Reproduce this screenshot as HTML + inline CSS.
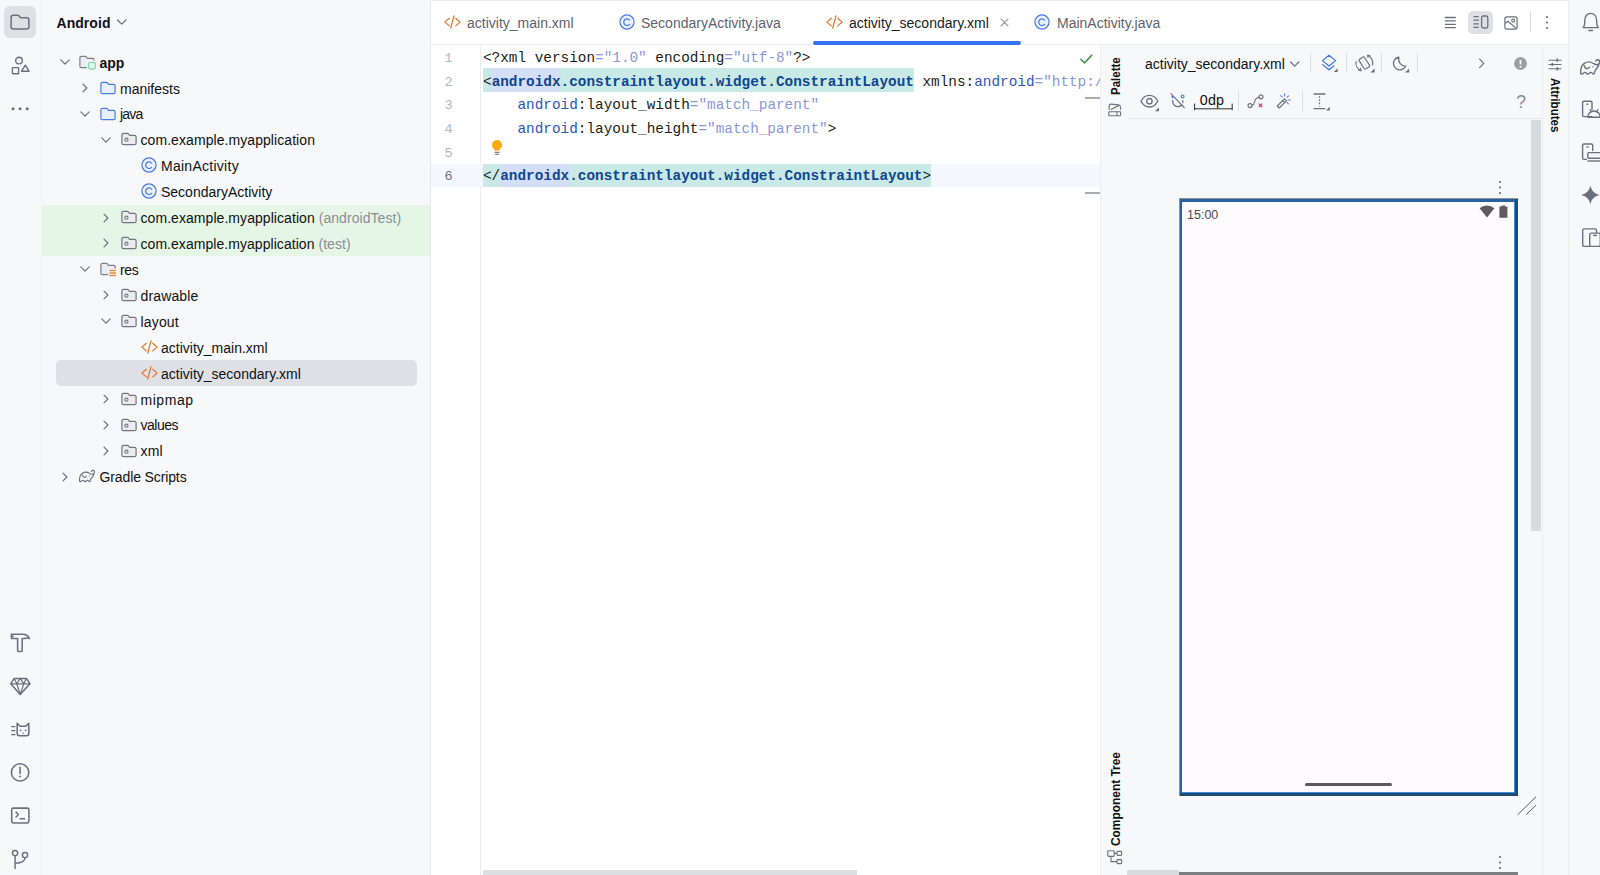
<!DOCTYPE html>
<html><head><meta charset="utf-8"><title>Android Studio</title>
<style>
html,body{margin:0;padding:0}
body{width:1600px;height:875px;position:relative;overflow:hidden;background:#f7f8fa;font-family:"Liberation Sans",sans-serif;font-size:14px;color:#1e1f22}
.abs{position:absolute}
svg{position:absolute;overflow:visible;fill:none}
.t{position:absolute;white-space:pre;line-height:26px;height:26px;font-size:14px;color:#101114}
.g{color:#8a8d97}
.tab{position:absolute;white-space:pre;top:9.7px;line-height:26px;font-size:14px;color:#5f626b}
.code{position:absolute;left:483px;white-space:pre;font-family:"Liberation Mono",monospace;font-size:14.37px;line-height:23.7px;height:23.7px;color:#1c1d21}
.ln{position:absolute;left:438.7px;width:14px;text-align:right;font-family:"Liberation Mono",monospace;font-size:13.5px;line-height:23.7px;color:#b2b6c3}
.tg{color:#0f4591;font-weight:bold}
.at{color:#2a57b8}
.st{color:#8a96dc}
.vt{position:absolute;white-space:pre;font-size:13.5px;line-height:16px;height:16px;color:#111;transform-origin:0 0}
</style></head><body>
<div class="abs" style="left:431px;top:0px;width:1137px;height:45px;background:#fff;"></div>
<div class="abs" style="left:431px;top:45px;width:669px;height:830px;background:#fff;"></div>
<div class="abs" style="left:41px;top:0px;width:1px;height:875px;background:#f0f1f4;"></div>
<div class="abs" style="left:430px;top:0px;width:1px;height:875px;background:#e6e7eb;"></div>
<div class="abs" style="left:431px;top:44px;width:1137px;height:1px;background:#ecedf0;"></div>
<div class="abs" style="left:431px;top:0px;width:1137px;height:1px;background:#ececef;"></div>
<div class="abs" style="left:480px;top:45px;width:1px;height:830px;background:#eaebee;"></div>
<div class="abs" style="left:1100px;top:45px;width:1px;height:830px;background:#ebecf0;"></div>
<div class="abs" style="left:1568px;top:0px;width:1px;height:875px;background:#ebecf0;"></div>
<div class="abs" style="left:1542px;top:45px;width:1px;height:830px;background:#ebecf0;"></div>
<div class="abs" style="left:1128px;top:118px;width:414px;height:1px;background:#e6e7eb;"></div>
<div id="tree">
<div class="abs" style="left:42px;top:204.52px;width:388px;height:51.91999999999999px;background:#e5f6e6;"></div>
<div class="abs" style="left:56px;top:360.24px;width:361px;height:25.6px;background:#dfe0e5;border-radius:5px"></div>
<div class="abs" style="left:4px;top:6px;width:32px;height:32px;background:#dfe0e4;border-radius:6px"></div>
<div class="t" style="left:56.5px;top:9.7px;font-weight:bold;letter-spacing:0.05px">Android</div>
<svg style="left:115.00px;top:16.00px" width="14" height="12" viewBox="0 0 14 12"><path d="M2.5 4L6.7 8.2L10.9 4" stroke="#6c707e" stroke-width="1.2" stroke-linecap="round" stroke-linejoin="round"/></svg>
<svg style="left:58.80px;top:56.00px" width="12" height="12" viewBox="0 0 12 12"><path d="M1.8 3.9L6 8.1L10.2 3.9" stroke="#6c707e" stroke-width="1.2" stroke-linecap="round" stroke-linejoin="round"/></svg>
<svg style="left:79.00px;top:53.80px" width="16" height="16" viewBox="0 0 16 16"><path d="M0.9 3.8Q0.9 2.3 2.4 2.3H6.2Q6.9 2.3 7.4 2.9L8.6 4.3H13.6Q15.1 4.3 15.1 5.8V12.2Q15.1 13.7 13.6 13.7H2.4Q0.9 13.7 0.9 12.2Z" stroke="#7b7e88" fill="#ebecf0" stroke-width="1.2"/><rect x="7.7" y="6.4" width="10" height="10" fill="#f7f8fa"/><rect x="9.5" y="8.3" width="6.8" height="6.8" rx="1.8" stroke="#86d6ae" fill="#e2f7ec" stroke-width="1.3"/></svg>
<div class="t" style="left:99.5px;top:49.60px;font-weight:bold;">app</div>
<svg style="left:79.00px;top:81.92px" width="12" height="12" viewBox="0 0 12 12"><path d="M4 2.1L7.9 6L4 9.9" stroke="#6c707e" stroke-width="1.2" stroke-linecap="round" stroke-linejoin="round"/></svg>
<svg style="left:100.00px;top:79.72px" width="16" height="16" viewBox="0 0 16 16"><path d="M0.9 3.8Q0.9 2.3 2.4 2.3H6.2Q6.9 2.3 7.4 2.9L8.6 4.3H13.6Q15.1 4.3 15.1 5.8V12.2Q15.1 13.7 13.6 13.7H2.4Q0.9 13.7 0.9 12.2Z" stroke="#4a7be0" fill="#e8f0fe" stroke-width="1.2"/></svg>
<div class="t" style="left:120px;top:75.52px;">manifests</div>
<svg style="left:79.00px;top:107.84px" width="12" height="12" viewBox="0 0 12 12"><path d="M1.8 3.9L6 8.1L10.2 3.9" stroke="#6c707e" stroke-width="1.2" stroke-linecap="round" stroke-linejoin="round"/></svg>
<svg style="left:100.00px;top:105.64px" width="16" height="16" viewBox="0 0 16 16"><path d="M0.9 3.8Q0.9 2.3 2.4 2.3H6.2Q6.9 2.3 7.4 2.9L8.6 4.3H13.6Q15.1 4.3 15.1 5.8V12.2Q15.1 13.7 13.6 13.7H2.4Q0.9 13.7 0.9 12.2Z" stroke="#4a7be0" fill="#e8f0fe" stroke-width="1.2"/></svg>
<div class="t" style="left:120px;top:101.44px;letter-spacing:-0.8px;">java</div>
<svg style="left:99.60px;top:133.76px" width="12" height="12" viewBox="0 0 12 12"><path d="M1.8 3.9L6 8.1L10.2 3.9" stroke="#6c707e" stroke-width="1.2" stroke-linecap="round" stroke-linejoin="round"/></svg>
<svg style="left:120.80px;top:131.46px" width="16" height="16" viewBox="0 0 16 16"><path d="M0.9 3.8Q0.9 2.3 2.4 2.3H6.2Q6.9 2.3 7.4 2.9L8.6 4.3H13.6Q15.1 4.3 15.1 5.8V12.2Q15.1 13.7 13.6 13.7H2.4Q0.9 13.7 0.9 12.2Z" stroke="#737680" fill="#ebecf0" stroke-width="1.2"/><circle cx="5.4" cy="8.7" r="1.6" stroke="#737680" stroke-width="1.1"/></svg>
<div class="t" style="left:140.5px;top:127.36px;letter-spacing:0.07px;">com.example.myapplication</div>
<svg style="left:141.30px;top:157.48px" width="16" height="16" viewBox="0 0 16 16"><circle cx="8" cy="8" r="7.1" stroke="#4a7be0" fill="#e8f0fe" stroke-width="1.2"/><path d="M10.6 6.1A3.3 3.3 0 1 0 10.6 10.3" stroke="#4a7be0" stroke-width="1.25" stroke-linecap="round"/></svg>
<div class="t" style="left:161px;top:153.28px;letter-spacing:0.27px;">MainActivity</div>
<svg style="left:141.30px;top:183.40px" width="16" height="16" viewBox="0 0 16 16"><circle cx="8" cy="8" r="7.1" stroke="#4a7be0" fill="#e8f0fe" stroke-width="1.2"/><path d="M10.6 6.1A3.3 3.3 0 1 0 10.6 10.3" stroke="#4a7be0" stroke-width="1.25" stroke-linecap="round"/></svg>
<div class="t" style="left:161px;top:179.20px;">SecondaryActivity</div>
<svg style="left:99.60px;top:211.52px" width="12" height="12" viewBox="0 0 12 12"><path d="M4 2.1L7.9 6L4 9.9" stroke="#6c707e" stroke-width="1.2" stroke-linecap="round" stroke-linejoin="round"/></svg>
<svg style="left:120.80px;top:209.22px" width="16" height="16" viewBox="0 0 16 16"><path d="M0.9 3.8Q0.9 2.3 2.4 2.3H6.2Q6.9 2.3 7.4 2.9L8.6 4.3H13.6Q15.1 4.3 15.1 5.8V12.2Q15.1 13.7 13.6 13.7H2.4Q0.9 13.7 0.9 12.2Z" stroke="#737680" fill="#ebecf0" stroke-width="1.2"/><circle cx="5.4" cy="8.7" r="1.6" stroke="#737680" stroke-width="1.1"/></svg>
<div class="t" style="left:140.5px;top:205.12px;letter-spacing:0.06px;">com.example.myapplication <span class="g">(androidTest)</span></div>
<svg style="left:99.60px;top:237.44px" width="12" height="12" viewBox="0 0 12 12"><path d="M4 2.1L7.9 6L4 9.9" stroke="#6c707e" stroke-width="1.2" stroke-linecap="round" stroke-linejoin="round"/></svg>
<svg style="left:120.80px;top:235.14px" width="16" height="16" viewBox="0 0 16 16"><path d="M0.9 3.8Q0.9 2.3 2.4 2.3H6.2Q6.9 2.3 7.4 2.9L8.6 4.3H13.6Q15.1 4.3 15.1 5.8V12.2Q15.1 13.7 13.6 13.7H2.4Q0.9 13.7 0.9 12.2Z" stroke="#737680" fill="#ebecf0" stroke-width="1.2"/><circle cx="5.4" cy="8.7" r="1.6" stroke="#737680" stroke-width="1.1"/></svg>
<div class="t" style="left:140.5px;top:231.04px;letter-spacing:0.05px;">com.example.myapplication <span class="g">(test)</span></div>
<svg style="left:79.00px;top:263.36px" width="12" height="12" viewBox="0 0 12 12"><path d="M1.8 3.9L6 8.1L10.2 3.9" stroke="#6c707e" stroke-width="1.2" stroke-linecap="round" stroke-linejoin="round"/></svg>
<svg style="left:100.00px;top:260.86px" width="16" height="16" viewBox="0 0 16 16"><path d="M0.9 3.8Q0.9 2.3 2.4 2.3H6.2Q6.9 2.3 7.4 2.9L8.6 4.3H13.6Q15.1 4.3 15.1 5.8V12.2Q15.1 13.7 13.6 13.7H2.4Q0.9 13.7 0.9 12.2Z" stroke="#7d808b" fill="#ebecf0" stroke-width="1.2"/><rect x="8.2" y="7.6" width="9" height="9" fill="#f7f8fa"/><path d="M9.4 9.6H16M9.4 12H16M9.4 14.4H16" stroke="#ea8a3c" stroke-width="1.5"/></svg>
<div class="t" style="left:120px;top:256.96px;letter-spacing:-0.3px;">res</div>
<svg style="left:99.60px;top:289.28px" width="12" height="12" viewBox="0 0 12 12"><path d="M4 2.1L7.9 6L4 9.9" stroke="#6c707e" stroke-width="1.2" stroke-linecap="round" stroke-linejoin="round"/></svg>
<svg style="left:120.80px;top:286.98px" width="16" height="16" viewBox="0 0 16 16"><path d="M0.9 3.8Q0.9 2.3 2.4 2.3H6.2Q6.9 2.3 7.4 2.9L8.6 4.3H13.6Q15.1 4.3 15.1 5.8V12.2Q15.1 13.7 13.6 13.7H2.4Q0.9 13.7 0.9 12.2Z" stroke="#737680" fill="#ebecf0" stroke-width="1.2"/><circle cx="5.4" cy="8.7" r="1.6" stroke="#737680" stroke-width="1.1"/></svg>
<div class="t" style="left:140.5px;top:282.88px;letter-spacing:0.14px;">drawable</div>
<svg style="left:99.60px;top:315.20px" width="12" height="12" viewBox="0 0 12 12"><path d="M1.8 3.9L6 8.1L10.2 3.9" stroke="#6c707e" stroke-width="1.2" stroke-linecap="round" stroke-linejoin="round"/></svg>
<svg style="left:120.80px;top:312.90px" width="16" height="16" viewBox="0 0 16 16"><path d="M0.9 3.8Q0.9 2.3 2.4 2.3H6.2Q6.9 2.3 7.4 2.9L8.6 4.3H13.6Q15.1 4.3 15.1 5.8V12.2Q15.1 13.7 13.6 13.7H2.4Q0.9 13.7 0.9 12.2Z" stroke="#737680" fill="#ebecf0" stroke-width="1.2"/><circle cx="5.4" cy="8.7" r="1.6" stroke="#737680" stroke-width="1.1"/></svg>
<div class="t" style="left:140.5px;top:308.80px;letter-spacing:0.17px;">layout</div>
<svg style="left:140.50px;top:339.12px" width="17" height="16" viewBox="0 0 17 16"><path d="M5.3 4.3L0.9 8.1L5.3 11.9M11.7 4.3L16.1 8.1L11.7 11.9M10 1.8L6.7 14.2" stroke="#e2752b" stroke-width="1.25" stroke-linecap="round" stroke-linejoin="round"/></svg>
<div class="t" style="left:161px;top:334.72px;">activity_main.xml</div>
<svg style="left:140.50px;top:365.04px" width="17" height="16" viewBox="0 0 17 16"><path d="M5.3 4.3L0.9 8.1L5.3 11.9M11.7 4.3L16.1 8.1L11.7 11.9M10 1.8L6.7 14.2" stroke="#e2752b" stroke-width="1.25" stroke-linecap="round" stroke-linejoin="round"/></svg>
<div class="t" style="left:161px;top:360.64px;">activity_secondary.xml</div>
<svg style="left:99.60px;top:392.96px" width="12" height="12" viewBox="0 0 12 12"><path d="M4 2.1L7.9 6L4 9.9" stroke="#6c707e" stroke-width="1.2" stroke-linecap="round" stroke-linejoin="round"/></svg>
<svg style="left:120.80px;top:390.66px" width="16" height="16" viewBox="0 0 16 16"><path d="M0.9 3.8Q0.9 2.3 2.4 2.3H6.2Q6.9 2.3 7.4 2.9L8.6 4.3H13.6Q15.1 4.3 15.1 5.8V12.2Q15.1 13.7 13.6 13.7H2.4Q0.9 13.7 0.9 12.2Z" stroke="#737680" fill="#ebecf0" stroke-width="1.2"/><circle cx="5.4" cy="8.7" r="1.6" stroke="#737680" stroke-width="1.1"/></svg>
<div class="t" style="left:140.5px;top:386.56px;letter-spacing:0.55px;">mipmap</div>
<svg style="left:99.60px;top:418.88px" width="12" height="12" viewBox="0 0 12 12"><path d="M4 2.1L7.9 6L4 9.9" stroke="#6c707e" stroke-width="1.2" stroke-linecap="round" stroke-linejoin="round"/></svg>
<svg style="left:120.80px;top:416.58px" width="16" height="16" viewBox="0 0 16 16"><path d="M0.9 3.8Q0.9 2.3 2.4 2.3H6.2Q6.9 2.3 7.4 2.9L8.6 4.3H13.6Q15.1 4.3 15.1 5.8V12.2Q15.1 13.7 13.6 13.7H2.4Q0.9 13.7 0.9 12.2Z" stroke="#737680" fill="#ebecf0" stroke-width="1.2"/><circle cx="5.4" cy="8.7" r="1.6" stroke="#737680" stroke-width="1.1"/></svg>
<div class="t" style="left:140.5px;top:412.48px;letter-spacing:-0.5px;">values</div>
<svg style="left:99.60px;top:444.80px" width="12" height="12" viewBox="0 0 12 12"><path d="M4 2.1L7.9 6L4 9.9" stroke="#6c707e" stroke-width="1.2" stroke-linecap="round" stroke-linejoin="round"/></svg>
<svg style="left:120.80px;top:442.50px" width="16" height="16" viewBox="0 0 16 16"><path d="M0.9 3.8Q0.9 2.3 2.4 2.3H6.2Q6.9 2.3 7.4 2.9L8.6 4.3H13.6Q15.1 4.3 15.1 5.8V12.2Q15.1 13.7 13.6 13.7H2.4Q0.9 13.7 0.9 12.2Z" stroke="#737680" fill="#ebecf0" stroke-width="1.2"/><circle cx="5.4" cy="8.7" r="1.6" stroke="#737680" stroke-width="1.1"/></svg>
<div class="t" style="left:140.5px;top:438.40px;letter-spacing:0.2px;">xml</div>
<svg style="left:58.80px;top:470.72px" width="12" height="12" viewBox="0 0 12 12"><path d="M4 2.1L7.9 6L4 9.9" stroke="#6c707e" stroke-width="1.2" stroke-linecap="round" stroke-linejoin="round"/></svg>
<svg style="left:79.00px;top:469.12px" width="16.0" height="14.0" viewBox="0 0 16 14"><path d="M0.6 12.3C0.3 9 1.5 5.5 3.4 4.2C5.5 2.8 8.5 3 10.4 4.3C11.8 5.2 13.5 5.6 14.6 4.8C15.9 3.8 15.8 1.7 14.4 1.4C13.5 1.2 12.7 1.7 12.4 2.4M15 4.6C14.8 6.5 13.5 8 12.4 9.2C11.6 10.2 11.4 11.3 11.2 12.3C10.7 12.8 10 12.6 9.6 11.9C9 11.1 8 11.1 7.4 11.9C6.8 12.9 5.6 12.9 5 11.9C4.4 11.1 3.4 11.1 2.8 11.9C2.2 12.7 1.2 12.9 0.6 12.3M3.3 6C3.6 7.8 5 8.6 6.2 8.2C7 8 7.5 7.5 7.6 7.2" stroke="#6c707e" stroke-width="1.10" stroke-linecap="round" stroke-linejoin="round"/><circle cx="10.2" cy="6.8" r="0.55" fill="#6c707e"/></svg>
<div class="t" style="left:99.5px;top:464.32px;letter-spacing:-0.12px;">Gradle Scripts</div>
</div>
<div id="leftstrip">
<svg style="left:10.00px;top:12.00px" width="20" height="20" viewBox="0 0 20 20"><path d="M1.1 5.6Q1.1 3.3 3.4 3.3H7.6Q8.5 3.3 9.1 4L10.6 5.7H16.6Q18.9 5.7 18.9 8V14.8Q18.9 17.1 16.6 17.1H3.4Q1.1 17.1 1.1 14.8Z" stroke="#6c707e" stroke-width="1.5" stroke-linejoin="round"/></svg>
<svg style="left:10.00px;top:56.00px" width="20" height="20" viewBox="0 0 20 20"><circle cx="9" cy="4.6" r="3.3" stroke="#6c707e" stroke-width="1.4"/><rect x="2.4" y="11.6" width="6.2" height="6.2" rx="0.6" stroke="#6c707e" stroke-width="1.4"/><path d="M15.3 9.2L19 15.2H11.6Z" stroke="#6c707e" stroke-width="1.4" stroke-linejoin="round"/></svg>
<svg style="left:10.00px;top:100.00px" width="20" height="18" viewBox="0 0 20 18"><circle cx="3" cy="8.7" r="1.5" fill="#6c707e"/><circle cx="10.1" cy="8.7" r="1.5" fill="#6c707e"/><circle cx="17.2" cy="8.7" r="1.5" fill="#6c707e"/></svg>
<svg style="left:10.00px;top:632.00px" width="21" height="21" viewBox="0 0 21 21"><path d="M1.4 2.2H12.6C16 2.2 18.6 3.8 19.4 6.6C17.8 5.8 16.2 5.8 14.6 6.4H12.2M1.4 2.2V6.4H7.6M1.4 4.2H3.2" stroke="#6c707e" stroke-width="1.55" stroke-linejoin="round" stroke-linecap="round"/><path d="M7.6 6.4V18.6Q7.6 19.4 8.4 19.4H11.4Q12.2 19.4 12.2 18.6V6.4" stroke="#6c707e" stroke-width="1.55" stroke-linejoin="round"/></svg>
<svg style="left:10.00px;top:677.00px" width="21" height="19" viewBox="0 0 21 19"><path d="M4.2 1.4H16.4L20 6.8L10.2 17.4L0.8 6.8Z" stroke="#6c707e" stroke-width="1.55" stroke-linejoin="round"/><path d="M0.8 6.8H20M4.2 1.4L6.8 6.8L10.2 17.4L13.8 6.8L16.4 1.4M6.8 6.8L10.2 1.4L13.8 6.8" stroke="#6c707e" stroke-width="1.2" stroke-linejoin="round"/></svg>
<svg style="left:10.00px;top:722.00px" width="21" height="16" viewBox="0 0 21 16"><path d="M7.2 1.2L10.2 4.2H15.8L18.8 1.2V11.6Q18.8 13.8 16.6 13.8H9.4Q7.2 13.8 7.2 11.6Z" stroke="#6c707e" stroke-width="1.55" stroke-linejoin="round"/><path d="M1.2 4.6H5.4M1.2 8.6H5.4M1.2 12.6H5.4" stroke="#6c707e" stroke-width="1.45"/><circle cx="10.6" cy="8.3" r="0.9" fill="#6c707e"/><circle cx="15.6" cy="8.3" r="0.9" fill="#6c707e"/><circle cx="13.1" cy="11.2" r="0.7" fill="#6c707e"/></svg>
<svg style="left:10.00px;top:762.00px" width="21" height="21" viewBox="0 0 21 21"><circle cx="10.1" cy="10.4" r="8.7" stroke="#6c707e" stroke-width="1.55"/><path d="M10.1 5.4V11.4" stroke="#6c707e" stroke-width="1.6" stroke-linecap="round"/><circle cx="10.1" cy="14.6" r="1" fill="#6c707e"/></svg>
<svg style="left:10.00px;top:806.00px" width="21" height="19" viewBox="0 0 21 19"><rect x="1.7" y="2.1" width="17.2" height="14.8" rx="1.6" stroke="#6c707e" stroke-width="1.55"/><path d="M5.6 5.8L8.4 8.6L5.6 11.4M9.6 12.8H15" stroke="#6c707e" stroke-width="1.45" stroke-linejoin="round"/></svg>
<svg style="left:10.00px;top:848.00px" width="21" height="22" viewBox="0 0 21 22"><circle cx="5.1" cy="5.1" r="2.6" stroke="#6c707e" stroke-width="1.45"/><circle cx="15" cy="7.1" r="2.6" stroke="#6c707e" stroke-width="1.45"/><path d="M5.1 7.7V20.4M15 9.7C15 13.6 10 15 5.1 15.2" stroke="#6c707e" stroke-width="1.45" stroke-linecap="round"/></svg>
<svg style="left:1581.00px;top:12.00px" width="20" height="20" viewBox="0 0 20 20"><path d="M2.2 15.6H17.2C15.6 14 15.6 12.4 15.6 8.6C15.6 4 13 1.4 9.7 1.4C6.4 1.4 3.8 4 3.8 8.6C3.8 12.4 3.8 14 2.2 15.6Z" stroke="#6c707e" stroke-width="1.4" stroke-linejoin="round"/><path d="M7.9 18.4H11.5" stroke="#6c707e" stroke-width="1.5" stroke-linecap="round"/></svg>
<svg style="left:1580.00px;top:57.50px" width="20.32" height="17.78" viewBox="0 0 16 14"><path d="M0.6 12.3C0.3 9 1.5 5.5 3.4 4.2C5.5 2.8 8.5 3 10.4 4.3C11.8 5.2 13.5 5.6 14.6 4.8C15.9 3.8 15.8 1.7 14.4 1.4C13.5 1.2 12.7 1.7 12.4 2.4M15 4.6C14.8 6.5 13.5 8 12.4 9.2C11.6 10.2 11.4 11.3 11.2 12.3C10.7 12.8 10 12.6 9.6 11.9C9 11.1 8 11.1 7.4 11.9C6.8 12.9 5.6 12.9 5 11.9C4.4 11.1 3.4 11.1 2.8 11.9C2.2 12.7 1.2 12.9 0.6 12.3M3.3 6C3.6 7.8 5 8.6 6.2 8.2C7 8 7.5 7.5 7.6 7.2" stroke="#6c707e" stroke-width="1.10" stroke-linecap="round" stroke-linejoin="round"/><circle cx="10.2" cy="6.8" r="0.55" fill="#6c707e"/></svg>
<svg style="left:1581.00px;top:100.00px" width="20" height="19" viewBox="0 0 20 19"><path d="M11 16.6H2.9Q1.6 16.6 1.6 15.3V2.5Q1.6 1.2 2.9 1.2H9.7Q11 1.2 11 2.5V9.4" stroke="#6c707e" stroke-width="1.4" stroke-linecap="round"/><path d="M5.2 4.2H7.4" stroke="#6c707e" stroke-width="1.3"/><path d="M6.8 17.2A6.2 6.2 0 0 1 19.2 17.2Z" stroke="#6c707e" stroke-width="1.4" stroke-linejoin="round"/><path d="M9 9.6L10.4 11.8M17 9.6L15.6 11.8" stroke="#6c707e" stroke-width="1.2" stroke-linecap="round"/></svg>
<svg style="left:1581.00px;top:142.00px" width="20" height="20" viewBox="0 0 20 20"><path d="M5.4 17.4H2.9Q1.6 17.4 1.6 16.1V3.3Q1.6 2 2.9 2H10.4Q11.7 2 11.7 3.3V8.6" stroke="#6c707e" stroke-width="1.4" stroke-linecap="round"/><path d="M5.4 5H7.6" stroke="#6c707e" stroke-width="1.3"/><rect x="6.8" y="10.6" width="13" height="5.6" rx="1" stroke="#6c707e" stroke-width="1.4"/><path d="M6.4 19H19.6" stroke="#6c707e" stroke-width="1.4"/></svg>
<svg style="left:1581.00px;top:185.00px" width="20" height="20" viewBox="0 0 20 20"><path d="M9.4 0.3C10.1 5.4 13.6 9 18.9 9.9C13.6 10.8 10.1 14.4 9.4 19.5C8.7 14.4 5.2 10.8 -0.1 9.9C5.2 9 8.7 5.4 9.4 0.3Z" fill="#6c707e"/></svg>
<svg style="left:1581.00px;top:227.00px" width="20" height="21" viewBox="0 0 20 21"><path d="M8.6 19.4H3.2Q1.7 19.4 1.7 17.9V3.4Q1.7 1.9 3.2 1.9H14Q15.5 1.9 15.5 3.4V5.4" stroke="#6c707e" stroke-width="1.4" stroke-linecap="round"/><rect x="8.7" y="6.1" width="10.6" height="13.3" rx="1.6" stroke="#6c707e" stroke-width="1.4"/><path d="M12 8.4H16" stroke="#6c707e" stroke-width="1.4"/></svg>
</div>
<div id="tabs">
<svg style="left:443.50px;top:14.30px" width="17" height="16" viewBox="0 0 17 16"><path d="M5.3 4.3L0.9 8.1L5.3 11.9M11.7 4.3L16.1 8.1L11.7 11.9M10 1.8L6.7 14.2" stroke="#e2752b" stroke-width="1.25" stroke-linecap="round" stroke-linejoin="round"/></svg>
<div class="tab" style="left:467px">activity_main.xml</div>
<svg style="left:619.20px;top:14.30px" width="16" height="16" viewBox="0 0 16 16"><circle cx="8" cy="8" r="7.1" stroke="#4a7be0" fill="#e8f0fe" stroke-width="1.2"/><path d="M10.6 6.1A3.3 3.3 0 1 0 10.6 10.3" stroke="#4a7be0" stroke-width="1.25" stroke-linecap="round"/></svg>
<div class="tab" style="left:641px">SecondaryActivity.java</div>
<svg style="left:826.00px;top:14.30px" width="17" height="16" viewBox="0 0 17 16"><path d="M5.3 4.3L0.9 8.1L5.3 11.9M11.7 4.3L16.1 8.1L11.7 11.9M10 1.8L6.7 14.2" stroke="#e2752b" stroke-width="1.25" stroke-linecap="round" stroke-linejoin="round"/></svg>
<div class="tab" style="left:849px;color:#1b1c1f">activity_secondary.xml</div>
<svg style="left:1000.00px;top:18.00px" width="9" height="9" viewBox="0 0 9 9"><path d="M1 1L8 8M8 1L1 8" stroke="#9a9da8" stroke-width="1.1" stroke-linecap="round"/></svg>
<svg style="left:1033.50px;top:14.30px" width="16" height="16" viewBox="0 0 16 16"><circle cx="8" cy="8" r="7.1" stroke="#4a7be0" fill="#e8f0fe" stroke-width="1.2"/><path d="M10.6 6.1A3.3 3.3 0 1 0 10.6 10.3" stroke="#4a7be0" stroke-width="1.25" stroke-linecap="round"/></svg>
<div class="tab" style="left:1057px">MainActivity.java</div>
<div class="abs" style="left:813px;top:40.5px;width:208px;height:4px;background:#3574f0;border-radius:2px"></div>
<svg style="left:1444.00px;top:16.00px" width="13" height="13" viewBox="0 0 13 13"><path d="M0.8 1.5H11.8M0.8 4.9H11.8M0.8 8.3H11.8M0.8 11.7H11.8" stroke="#6c707e" stroke-width="1.3"/></svg>
<div class="abs" style="left:1468px;top:10.5px;width:25px;height:23px;background:#dfe0e4;border-radius:5px"></div>
<svg style="left:1473.00px;top:15.00px" width="16" height="14" viewBox="0 0 16 14"><path d="M0.5 1.6H5.8M0.5 5.2H5.8M0.5 8.8H5.8M0.5 12.4H5.8" stroke="#6c707e" stroke-width="1.3"/><rect x="8.6" y="1" width="6.2" height="12" rx="1.8" stroke="#6c707e" stroke-width="1.3"/></svg>
<svg style="left:1503.50px;top:15.50px" width="14" height="14" viewBox="0 0 14 14"><rect x="0.9" y="0.9" width="12.2" height="12.2" rx="2" stroke="#6c707e" stroke-width="1.2"/><circle cx="9.2" cy="4.6" r="1.5" stroke="#6c707e" stroke-width="1.1"/><path d="M1 7.2L4 5.2L12.4 12.6" stroke="#6c707e" stroke-width="1.2" stroke-linejoin="round"/></svg>
<div class="abs" style="left:1530px;top:11px;width:1px;height:21px;background:#dcdde1;"></div>
<svg style="left:1545.00px;top:15.00px" width="4" height="15" viewBox="0 0 4 15"><circle cx="2" cy="2" r="1.1" fill="#6c707e"/><circle cx="2" cy="7.5" r="1.1" fill="#6c707e"/><circle cx="2" cy="13" r="1.1" fill="#6c707e"/></svg>
</div>
<div id="code">
<div class="abs" style="left:431px;top:164px;width:669px;height:23px;background:#f4f7fe;"></div>
<div class="abs" style="left:482.5px;top:68.1px;width:431.5px;height:23.7px;background:#c8e9e6;"></div>
<div class="abs" style="left:491.4px;top:68.1px;width:68.6px;height:23.7px;background:#d4def6;"></div>
<div class="abs" style="left:482.5px;top:164px;width:448.5px;height:22.6px;background:#c8e9e6;"></div>
<div class="abs" style="left:500px;top:164px;width:69px;height:22.6px;background:#d4def6;"></div>
<div class="ln" style="top:46.9px">1</div>
<div class="ln" style="top:70.6px">2</div>
<div class="ln" style="top:94.3px">3</div>
<div class="ln" style="top:118.0px">4</div>
<div class="ln" style="top:141.7px">5</div>
<div class="ln" style="top:165.4px;color:#6f737e">6</div>
<div class="code" style="top:46.9px">&lt;?xml version<span class="st">="1.0"</span> encoding<span class="st">="utf-8"</span>?&gt;</div>
<div class="code" style="top:70.6px;width:617px;overflow:hidden">&lt;<span class="tg">androidx.constraintlayout.widget.ConstraintLayout</span> xmlns:<span class="at">android</span><span class="st">="http:/</span></div>
<div class="code" style="top:94.3px">    <span class="at">android</span>:layout_width<span class="st">="match_parent"</span></div>
<div class="code" style="top:118.0px">    <span class="at">android</span>:layout_height<span class="st">="match_parent"</span>&gt;</div>
<div class="code" style="top:165.4px">&lt;/<span class="tg">androidx.constraintlayout.widget.ConstraintLayout</span>&gt;</div>
<svg style="left:491.20px;top:139.30px" width="12" height="17" viewBox="0 0 12 17"><path d="M6 0.9A5 5 0 0 0 3.2 10V11.6H8.8V10A5 5 0 0 0 6 0.9Z" fill="#f9aa0e"/><path d="M3.6 13.3H8.4M4.2 15.3H7.8" stroke="#5b5c63" stroke-width="1.1"/></svg>
<svg style="left:1080.00px;top:54.00px" width="13" height="10" viewBox="0 0 13 10"><path d="M1 5.4L4.6 8.8L11.8 1.2" stroke="#4f9e55" stroke-width="1.7" stroke-linecap="round" stroke-linejoin="round"/></svg>
<div class="abs" style="left:1085px;top:96.5px;width:15px;height:2px;background:#a9adba;"></div>
<div class="abs" style="left:1085px;top:191.5px;width:15px;height:2px;background:#a9adba;"></div>
<div class="abs" style="left:483px;top:870px;width:374px;height:5px;background:#dddee1;"></div>
</div>
<div id="strips">
<div class="vt" style="left:1107.7px;top:95.2px;transform:rotate(-90deg) scaleX(0.943);font-weight:bold;font-size:12.2px">Palette</div>
<svg style="left:1108.00px;top:103.00px" width="14" height="14" viewBox="0 0 14 14"><rect x="0.8" y="8.8" width="11.8" height="4" rx="0.7" stroke="#6c707e" stroke-width="1.1"/><path d="M9 8.8V12.8" stroke="#6c707e" stroke-width="1"/><path d="M1.2 6.8V3Q1.2 1 3.2 1.1L10.6 1.9Q12.5 2.2 12.5 4.2V6.8M2.8 6.8L10.6 2.6" stroke="#6c707e" stroke-width="1.1" stroke-linejoin="round"/></svg>
<div class="vt" style="left:1107.7px;top:845.5px;transform:rotate(-90deg) scaleX(0.977);font-weight:bold;font-size:12.2px">Component Tree</div>
<svg style="left:1107.00px;top:850.00px" width="16" height="15" viewBox="0 0 16 15"><rect x="0.8" y="0.8" width="6.4" height="5.6" rx="0.8" stroke="#6c707e" stroke-width="1.1"/><rect x="10" y="1.4" width="4.6" height="4" rx="0.8" stroke="#6c707e" stroke-width="1.1"/><rect x="10" y="9.6" width="4.6" height="4" rx="0.8" stroke="#6c707e" stroke-width="1.1"/><path d="M7.2 3.4H10M4 6.4V11.6H10" stroke="#6c707e" stroke-width="1.1"/></svg>
<div class="vt" style="left:1563.3px;top:78px;transform:rotate(90deg) scaleX(0.943);font-weight:bold;font-size:12.2px">Attributes</div>
<svg style="left:1548.00px;top:57.80px" width="14" height="13" viewBox="0 0 14 13"><path d="M0.5 2.2H13.5M0.5 6.5H13.5M0.5 10.8H13.5" stroke="#6c707e" stroke-width="1.1"/><path d="M9.3 0.6V3.8M4.3 4.9V8.1M9.3 9.2V12.4" stroke="#6c707e" stroke-width="1.6"/></svg>
</div>
<div id="dtool">
<div class="t" style="left:1145px;top:51px">activity_secondary.xml</div>
<svg style="left:1289.00px;top:59.00px" width="12" height="10" viewBox="0 0 12 10"><path d="M1.6 3L5.7 7.1L9.8 3" stroke="#6c707e" stroke-width="1.2" stroke-linecap="round" stroke-linejoin="round"/></svg>
<div class="abs" style="left:1310.0px;top:52.5px;width:1px;height:20.5px;background:#dddee2;"></div>
<div class="abs" style="left:1345.5px;top:52.5px;width:1px;height:20.5px;background:#dddee2;"></div>
<div class="abs" style="left:1381.2px;top:52.5px;width:1px;height:20.5px;background:#dddee2;"></div>
<div class="abs" style="left:1417.2px;top:52.5px;width:1px;height:20.5px;background:#dddee2;"></div>
<svg style="left:1321.00px;top:54.00px" width="18" height="19" viewBox="0 0 18 19"><path d="M8 1.2L14.6 6.6L8 12L1.4 6.6Z" stroke="#3b73e6" stroke-width="1.2" stroke-linejoin="round"/><path d="M1.6 10.6L8 15.8L13 11.8" stroke="#3b73e6" stroke-width="1.2" stroke-linejoin="round" stroke-linecap="round"/><path d="M16.6 14.2V18H12.8Z" fill="#6c707e"/></svg>
<svg style="left:1354.50px;top:54.00px" width="20" height="19" viewBox="0 0 20 19"><rect x="6.2" y="3.2" width="6.3" height="11.6" rx="1" transform="rotate(-32 9.35 9)" stroke="#6c707e" stroke-width="1.15"/><path d="M1.08 7.54A8.4 8.4 0 0 0 5.93 16.67M12.63 1.27A8.4 8.4 0 0 1 17.53 10.89" stroke="#6c707e" stroke-width="1.2" stroke-linecap="round"/><path d="M3.6 16.2L5.93 16.67L5.6 14.4M14.9 1.6L12.63 1.27L13 3.4" stroke="#6c707e" stroke-width="1.1" stroke-linecap="round" stroke-linejoin="round"/><path d="M19.6 14.6V18.6H15.4Z" fill="#6c707e"/></svg>
<svg style="left:1392.00px;top:55.00px" width="18" height="18" viewBox="0 0 18 18"><path d="M6.9 2.1A6.4 6.4 0 1 0 13.7 11.05A7 7 0 0 1 6.9 2.1Z" stroke="#6c707e" stroke-width="1.2" stroke-linejoin="round"/><path d="M17.2 13.6V17.6H13Z" fill="#6c707e"/></svg>
<svg style="left:1478.00px;top:57.80px" width="8" height="11" viewBox="0 0 8 11"><path d="M1.6 1.2L5.8 5.4L1.6 9.6" stroke="#6c707e" stroke-width="1.2" stroke-linecap="round" stroke-linejoin="round"/></svg>
<svg style="left:1514.00px;top:56.80px" width="13" height="13" viewBox="0 0 13 13"><circle cx="6.5" cy="6.5" r="6.4" fill="#9c9ea6"/><path d="M6.5 3V7.4" stroke="#fff" stroke-width="1.7"/><circle cx="6.5" cy="9.7" r="0.95" fill="#fff"/></svg>
<svg style="left:1140.00px;top:93.50px" width="20" height="15" viewBox="0 0 20 15"><path d="M1 7.2C3 3.2 6 1.4 9.4 1.4C12.8 1.4 15.8 3.2 17.8 7.2C15.8 11.2 12.8 13 9.4 13C6 13 3 11.2 1 7.2Z" stroke="#6c707e" stroke-width="1.3"/><circle cx="9.4" cy="7.2" r="2.7" stroke="#6c707e" stroke-width="1.3"/><path d="M19 13.4V17.2H15Z" fill="#6c707e"/></svg>
<svg style="left:1169.50px;top:93.00px" width="16" height="16" viewBox="0 0 16 16"><path d="M2.8 7.3V8.6A5 5 0 0 0 11.7 11.75M12.85 7.5V9.6" stroke="#6c707e" stroke-width="1.2" stroke-linecap="round"/><path d="M0.9 0.7L14.25 14.6" stroke="#6c707e" stroke-width="1.2" stroke-linecap="round"/><circle cx="12.6" cy="3.4" r="1.45" stroke="#4b7be3" stroke-width="1.15"/><circle cx="2.5" cy="4" r="1.15" fill="#4b7be3"/></svg>
<div class="t" style="left:1199.8px;top:87.3px;font-size:14.3px;color:#111;letter-spacing:0.2px">0dp</div>
<svg style="left:1193.50px;top:102.50px" width="39" height="8" viewBox="0 0 39 8"><path d="M0.6 0.6V7.2M0.6 5.8H38.2M38.2 0.6V7.2" stroke="#2b2c30" stroke-width="1"/></svg>
<div class="abs" style="left:1237.5px;top:91px;width:1px;height:20px;background:#dcdde1;"></div>
<svg style="left:1247.00px;top:93.50px" width="18" height="15" viewBox="0 0 18 15"><circle cx="3" cy="11.6" r="2" stroke="#6c707e" stroke-width="1.15"/><circle cx="14" cy="2.8" r="2" stroke="#6c707e" stroke-width="1.15"/><path d="M5 11.6C8 11.6 7 5 9.6 4.2C10.6 3.6 11.4 3.2 12 3" stroke="#6c707e" stroke-width="1.15" stroke-linecap="round"/><path d="M11.8 9.6L15.2 13M15.2 9.6L11.8 13" stroke="#cf3a5e" stroke-width="1.2"/></svg>
<svg style="left:1276.00px;top:93.00px" width="17" height="16" viewBox="0 0 17 16"><path d="M1.2 13L8.4 5.8L10.4 7.8L3.2 15Z" stroke="#6c707e" stroke-width="1.15" stroke-linejoin="round"/><path d="M6.6 7.6L8.6 9.6" stroke="#6c707e" stroke-width="1.1"/><path d="M8.6 0.8V3M12.6 2.8L11.2 4.2M14.4 7H12M4.8 2.6L6.2 4M11 9.4L12.4 10.8" stroke="#5c82e6" stroke-width="1.1" stroke-linecap="round"/></svg>
<div class="abs" style="left:1301.5px;top:91px;width:1px;height:20px;background:#dcdde1;"></div>
<svg style="left:1313.00px;top:92.50px" width="18" height="19" viewBox="0 0 18 19"><path d="M0.6 1H12.4M0.6 15.6H12.4" stroke="#6c707e" stroke-width="1.3"/><path d="M6.5 3.2V13.6" stroke="#6c707e" stroke-width="1.2" stroke-dasharray="1.6 1.6"/><path d="M16.8 13.8V17.6H13Z" fill="#6c707e"/></svg>
<div class="abs" style="left:1516.2px;top:89.5px;font-size:17.5px;line-height:24px;color:#858892">?</div>
</div>
<div id="design">
<div class="abs" style="left:1531px;top:120px;width:10px;height:411px;background:#d9dadd;"></div>
<svg style="left:1498.00px;top:179.50px" width="4" height="15" viewBox="0 0 4 15"><circle cx="2" cy="2" r="1.1" fill="#6c707e"/><circle cx="2" cy="7.5" r="1.1" fill="#6c707e"/><circle cx="2" cy="13" r="1.1" fill="#6c707e"/></svg>
<div class="abs" style="left:1178.5px;top:198px;width:339px;height:598px;background:#8f9194;"></div>
<div class="abs" style="left:1179.5px;top:199px;width:338px;height:597px;background:#1d4b72;"></div>
<div class="abs" style="left:1179.5px;top:199px;width:335px;height:594.2px;background:#27639e;"></div>
<div class="abs" style="left:1182px;top:201.6px;width:332.5px;height:591.6px;background:#3a8fdc;"></div>
<div class="abs" style="left:1182px;top:201.6px;width:331.6px;height:590.6px;background:#fefbfe;"></div>
<div class="abs" style="left:1187px;top:206.8px;font-size:12.5px;line-height:16px;color:#4d494c">15:00</div>
<svg style="left:1479.00px;top:205.00px" width="16" height="13" viewBox="0 0 16 13"><path d="M8 12.6L0.6 3.2A11.4 11.4 0 0 1 15.4 3.2Z" fill="#5f5a5e"/></svg>
<svg style="left:1498.50px;top:205.00px" width="9" height="13" viewBox="0 0 9 13"><path d="M0.4 1.6H2.6V0.4H6V1.6H8.4V12.8H0.4Z" fill="#5f5a5e"/></svg>
<div class="abs" style="left:1304.5px;top:782.5px;width:87px;height:3.4px;background:#5d585a;border-radius:2px"></div>
<svg style="left:1516.00px;top:796.00px" width="21" height="20" viewBox="0 0 21 20"><path d="M1.6 18.8L20 0.8M10 18.8L20 9.2" stroke="#5a5d63" stroke-width="1"/></svg>
<svg style="left:1498.00px;top:854.50px" width="4" height="15" viewBox="0 0 4 15"><circle cx="2" cy="2" r="1.1" fill="#6c707e"/><circle cx="2" cy="7.5" r="1.1" fill="#6c707e"/><circle cx="2" cy="13" r="1.1" fill="#6c707e"/></svg>
<div class="abs" style="left:1127px;top:870px;width:52px;height:5px;background:#dadbdd;"></div>
<div class="abs" style="left:1179px;top:872px;width:338.5px;height:3px;background:#7d7e80;"></div>
</div>
</body></html>
